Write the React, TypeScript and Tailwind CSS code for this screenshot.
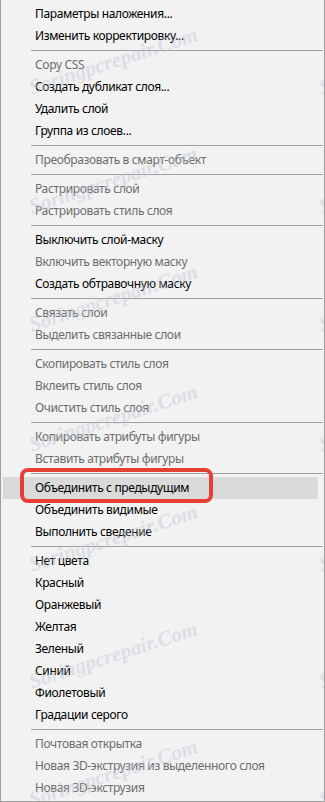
import React from "react";

type Entry = { t: string; d?: boolean; h?: boolean } | "sep";

const entries: Entry[] = [
  { t: "Параметры наложения..." },
  { t: "Изменить корректировку..." },
  "sep",
  { t: "Copy CSS", d: true },
  { t: "Создать дубликат слоя..." },
  { t: "Удалить слой" },
  { t: "Группа из слоев..." },
  "sep",
  { t: "Преобразовать в смарт-объект", d: true },
  "sep",
  { t: "Растрировать слой", d: true },
  { t: "Растрировать стиль слоя", d: true },
  "sep",
  { t: "Выключить слой-маску" },
  { t: "Включить векторную маску", d: true },
  { t: "Создать обтравочную маску" },
  "sep",
  { t: "Связать слои", d: true },
  { t: "Выделить связанные слои", d: true },
  "sep",
  { t: "Скопировать стиль слоя", d: true },
  { t: "Вклеить стиль слоя", d: true },
  { t: "Очистить стиль слоя", d: true },
  "sep",
  { t: "Копировать атрибуты фигуры", d: true },
  { t: "Вставить атрибуты фигуры", d: true },
  "sep",
  { t: "Объединить с предыдущим", h: true },
  { t: "Объединить видимые" },
  { t: "Выполнить сведение" },
  "sep",
  { t: "Нет цвета" },
  { t: "Красный" },
  { t: "Оранжевый" },
  { t: "Желтая" },
  { t: "Зеленый" },
  { t: "Синий" },
  { t: "Фиолетовый" },
  { t: "Градации серого" },
  "sep",
  { t: "Почтовая открытка", d: true },
  { t: "Новая 3D-экструзия из выделенного слоя", d: true },
  { t: "Новая 3D-экструзия", d: true },
];

const marks = [61, 180, 298, 418, 538, 655, 773];

export default function App() {
  return (
    <div
      className="relative w-[325px] h-[802px] overflow-hidden bg-[#f2f2f2] border-l border-r border-b border-[#a0a0a0] pt-[3px] pb-[2px] text-[12px] tracking-[-0.35px]"
      style={{ fontFamily: '"Noto Sans", "Open Sans", sans-serif' }}
    >
      {entries.map((e, i) =>
        e === "sep" ? (
          <div key={i} className="h-[7px] flex items-center ml-[30px] mr-[1px]">
            <div className="h-px w-full bg-[#a0a0a0]" />
          </div>
        ) : (
          <div
            key={i}
            className={
              "h-[22px] leading-[22px] ml-[2px] mr-[6px] pl-[32px] whitespace-nowrap " +
              (e.h ? "bg-[#dadada] " : "") +
              (e.d ? "text-[#6d6d6d]" : "text-[#000000]")
            }
          >
            {e.t}
          </div>
        )
      )}

      {marks.map((c, i) => (
        <React.Fragment key={i}>
          <div
            className="pointer-events-none absolute left-[12px] w-[200px] h-[30px] leading-[30px] text-center whitespace-nowrap italic font-bold text-[21px] tracking-normal text-[#b9c3d3] opacity-40 rotate-[-18deg]"
            style={{ top: c - 15, fontFamily: '"Liberation Serif", serif' }}
          >
            Soringpcrepair.Com
          </div>
          <div
            className="pointer-events-none absolute left-[302px] w-[200px] h-[30px] leading-[30px] text-center whitespace-nowrap italic font-bold text-[21px] tracking-normal text-[#b9c3d3] opacity-40 rotate-[-18deg]"
            style={{ top: c - 15, fontFamily: '"Liberation Serif", serif' }}
          >
            Soringpcrepair.Com
          </div>
        </React.Fragment>
      ))}

      <div className="pointer-events-none absolute left-[19px] top-[468px] w-[193px] h-[35px] rounded-[8px] border-[4px] border-[#e53f36]" />
    </div>
  );
}
